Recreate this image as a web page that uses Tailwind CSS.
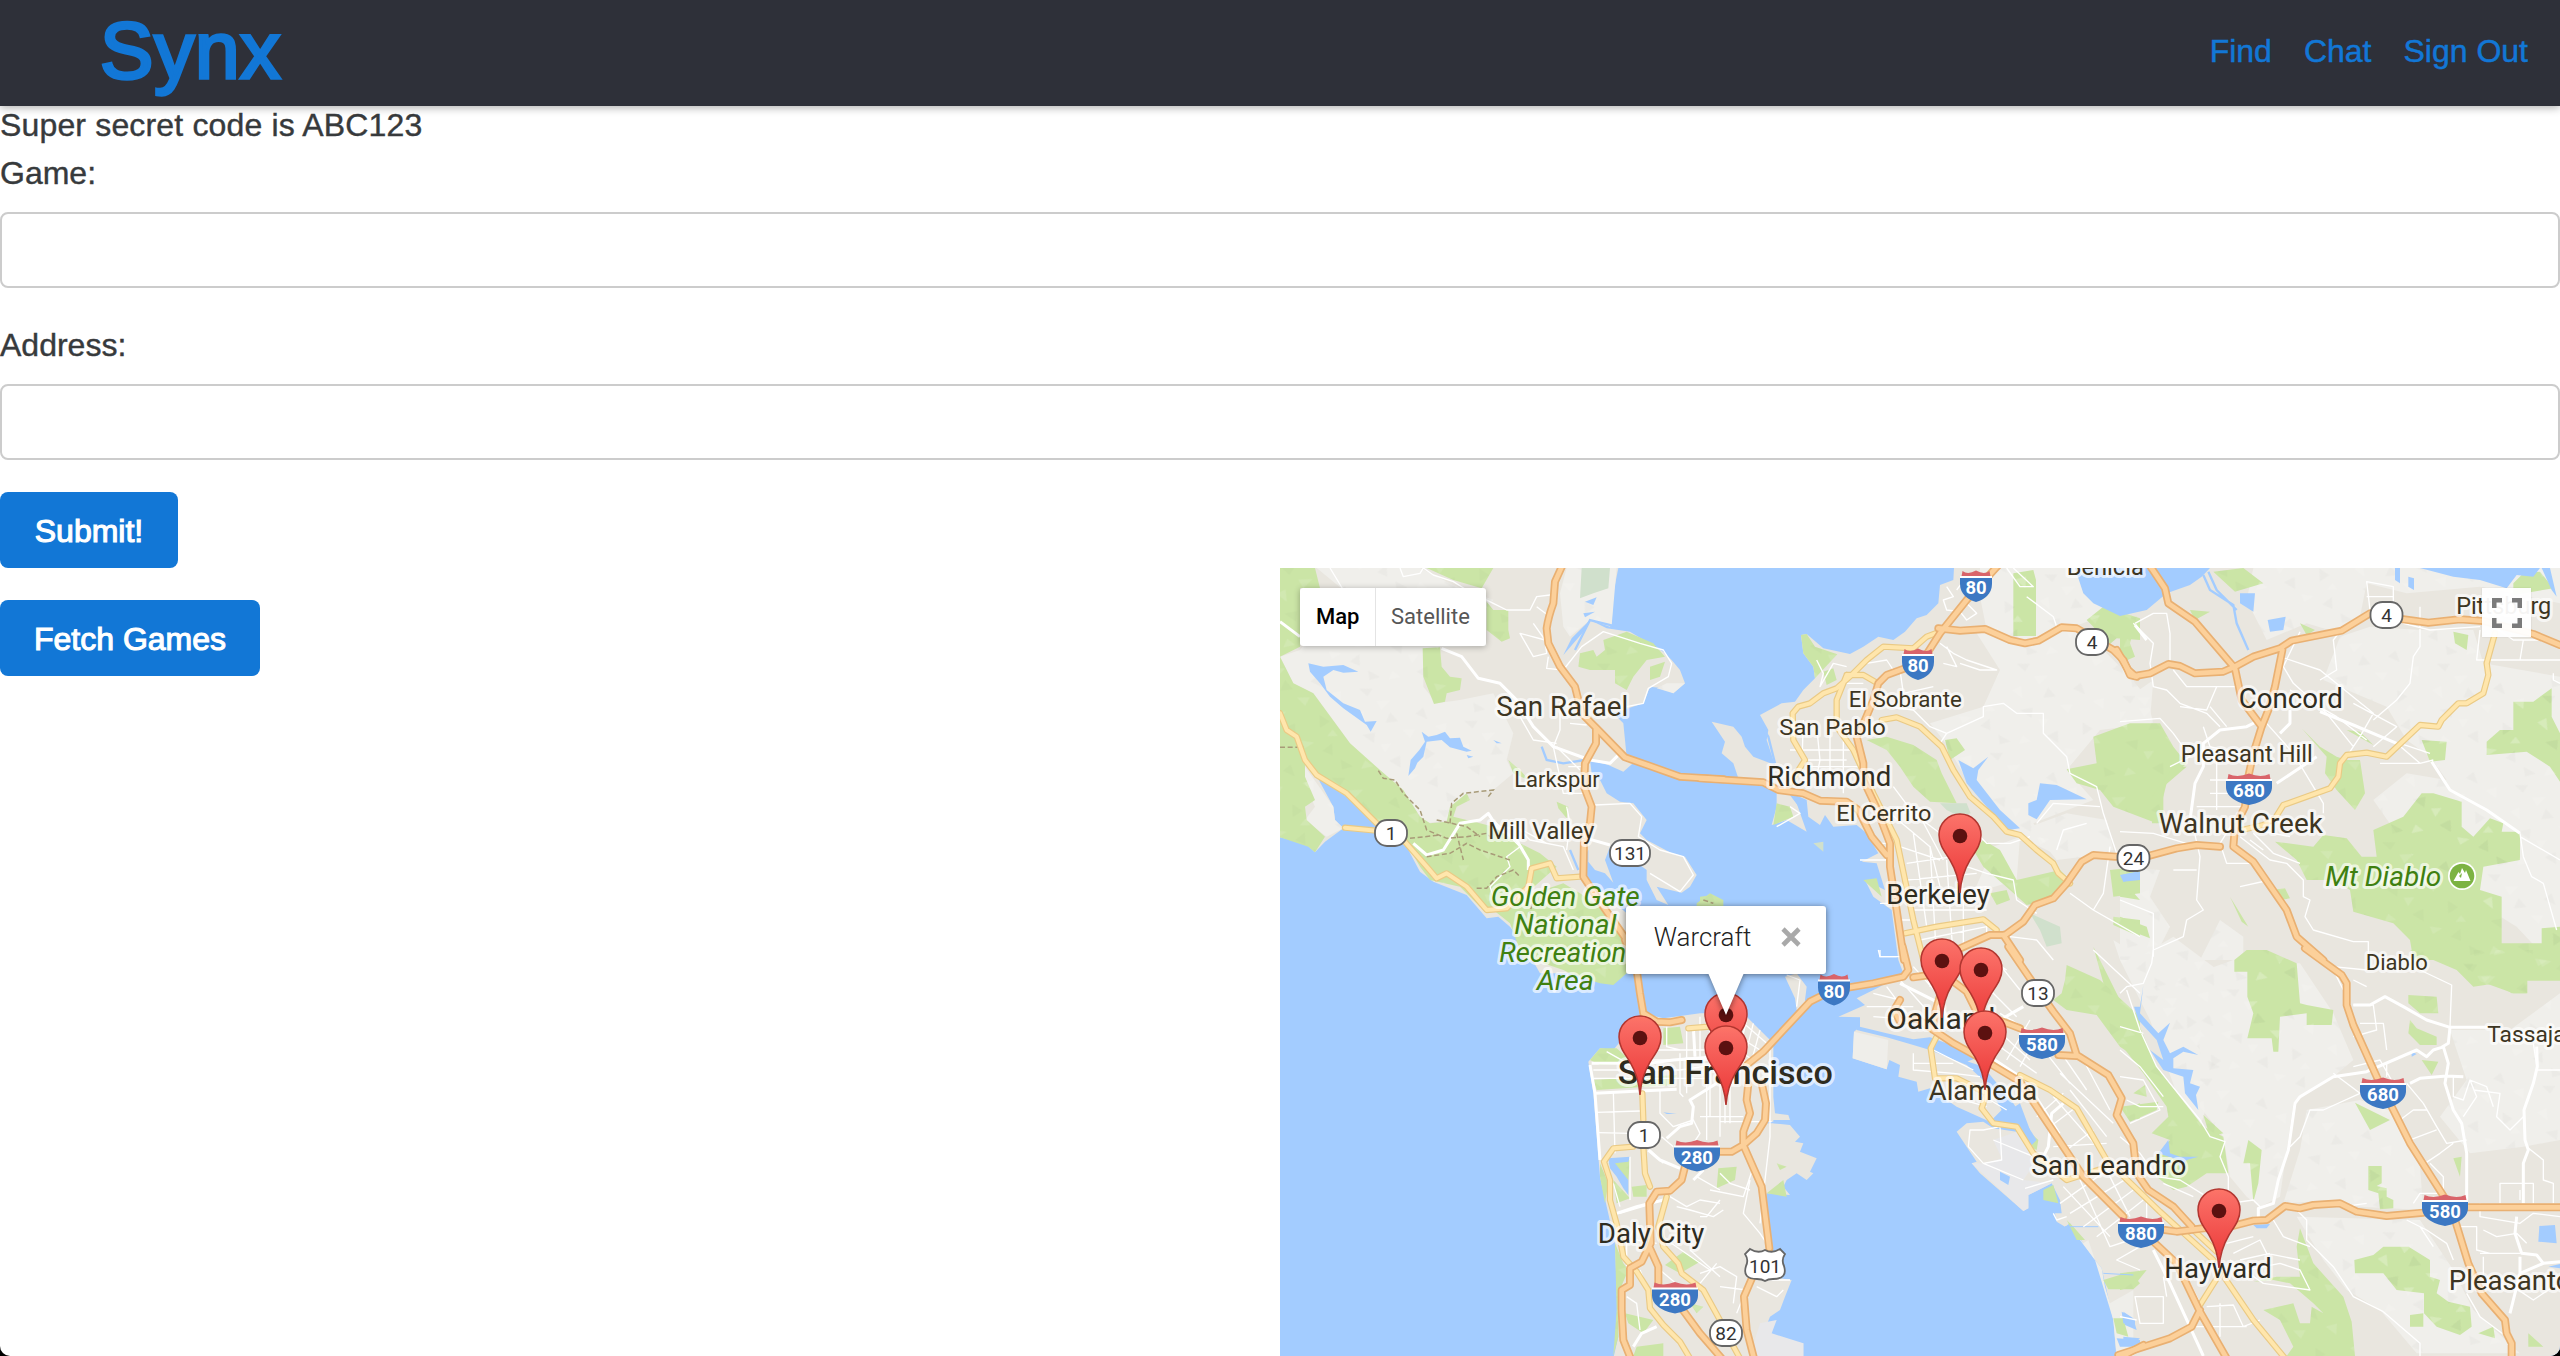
<!DOCTYPE html>
<html lang="en">
<head>
<meta charset="utf-8">
<title>Synx</title>
<script src="https://cdn.jsdelivr.net/npm/@tailwindcss/browser@4"></script>
</head>
<body class="bg-black">
<div class="flex h-[1356px] w-[2560px] flex-col overflow-hidden rounded-b-[10px] bg-white font-['Liberation_Sans',Arial,sans-serif] text-[32px] leading-[48px] text-[#373a3c]">
  <header class="z-10 flex h-[106px] shrink-0 items-start justify-between bg-[#2e3039] pl-[100px] pr-8 text-[#1277d6] shadow-[0_2px_8px_rgba(0,0,0,0.3)]">
    <a class="pt-[5px] text-[80px] leading-[92px] tracking-[0.8px] [-webkit-text-stroke:3.4px_#1277d6]">Synx</a>
    <nav class="flex gap-8 pt-[27px] [-webkit-text-stroke:0.5px_#1277d6]">
      <a>Find</a><a>Chat</a><a>Sign Out</a>
    </nav>
  </header>
  <form class="-mt-[5px] flex shrink-0 flex-col items-start">
    <p class="h-12 tracking-[0.16px] [-webkit-text-stroke:0.4px_#373a3c]">Super secret code is ABC123</p>
    <label class="h-12 [-webkit-text-stroke:0.4px_#373a3c]">Game:</label>
    <input class="mt-[15px] h-[76px] w-full rounded-lg border-2 border-[#ccc] bg-white px-6">
    <label class="mt-[33px] h-12 [-webkit-text-stroke:0.4px_#373a3c]">Address:</label>
    <input class="mt-[15px] h-[76px] w-full rounded-lg border-2 border-[#ccc] bg-white px-6">
    <button type="button" class="mt-8 h-[76px] w-[178px] rounded-lg bg-[#1277d6] pt-px text-white [-webkit-text-stroke:1.1px_#fff]">Submit!</button>
  </form>
  <div class="grid min-h-0 flex-1 grid-cols-2">
    <div class="pt-8">
      <button type="button" class="h-[76px] w-[260px] rounded-lg bg-[#1277d6] pt-px text-white [-webkit-text-stroke:1.1px_#fff]">Fetch Games</button>
    </div>
    <div class="relative overflow-hidden bg-[#a3ccff] font-[Roboto,sans-serif]">
      <svg class="block h-[788px] w-[1280px]" viewBox="1280 568 1280 788">
        <defs>
          <linearGradient id="pinFill" x1="0" y1="0" x2="0" y2="1"><stop offset="0" stop-color="#fd7567"/><stop offset=".1" stop-color="#fa6d65"/><stop offset="1" stop-color="#ea3535"/></linearGradient>
          <pattern id="facets" width="330" height="280" patternUnits="userSpaceOnUse" patternTransform="rotate(17)">
            <path fill="#000" fill-opacity=".018" d="M10,20l38,-12l-8,26zM120,60l30,20l-34,14zM210,18l22,30l-38,-6zM60,150l34,-18l6,30zM250,130l34,10l-22,26zM160,200l26,-24l12,34zM20,240l40,8l-28,18zM290,230l20,-30l12,34z"/>
            <path fill="#fff" fill-opacity=".12" d="M70,40l40,-14l-18,34zM170,100l36,-12l-6,28zM20,100l22,-20l14,34zM120,160l30,-10l-10,30zM260,60l30,-18l8,32zM220,220l38,-6l-22,24zM90,220l28,10l-32,18zM300,160l20,14l-30,10z"/>
          </pattern>
          <g id="pin"><path d="M0,0C-1,-14 -4,-23 -10,-33C-15,-41 -21,-48 -21,-58A21,21 0 1 1 21,-58C21,-48 15,-41 10,-33C4,-23 1,-14 0,0Z" fill="url(#pinFill)" stroke="#b23630" stroke-width="1.5"/><circle cy="-57" r="7.3" fill="#5c1110"/></g>

          <g id="lightland">
            <g transform="translate(1280 560) scale(.33333)">
              <path d="M110,24H420L520,75L640,120L600,165L620,258L480,262L430,300L430,380L470,430L540,420L640,400L700,520L680,600L700,640L640,690L560,700L500,780L440,790L380,720L300,640L210,550L100,400L40,370L0,290L60,270L190,90Z"/>
              <path d="M860,24H1010L995,195L930,180L870,230L850,200L840,100ZM1160,370L1215,370L1180,400L1130,385ZM75,620L160,740L165,780L190,805L140,830L75,780L105,740L70,660Z"/>
            </g>
            <g transform="translate(1700 560) scale(.33333)">
              <path d="M840,24H1130L1150,100L1230,160L1120,200L1180,240L1280,340L1340,410L1360,490L1200,510L1100,630L1180,720L1000,790L1060,880L960,830L880,740L790,640L730,540L690,490L850,440L900,330L830,220L860,210L840,110Z"/>
              <path d="M990,800L1100,760L1220,780L1240,870L1150,890L1070,900ZM820,1000L880,860L960,830L950,960ZM1260,1200L1240,1140L1320,1190L1420,1130L1620,1280L1600,1400L1500,1700L1430,1600L1350,1380Z"/>
            </g>
            <g transform="translate(2120 560) scale(.33333)">
              <path d="M400,24H1320V130L1080,80L860,100L740,70L720,170L660,220L560,190L440,240L380,120ZM610,360L660,230L750,200L900,210H1060L1090,310L1320,350V1218H1300L1190,1100L900,920L760,720L860,640L980,660L930,590L860,540L800,440Z"/>
              <path d="M0,430L100,360L90,480L0,480ZM240,1200L300,1080L370,1130V1200ZM0,920L120,930L90,1010L150,1100L100,1200H0Z"/>
            </g>
            <g transform="translate(2120 950) scale(.33333)">
              <path d="M200,80L340,30L540,40L640,190L700,330L640,380L520,460L480,740L420,770L380,740L330,680L310,560L240,470L240,300L100,110ZM560,480L720,450L830,490L900,650L910,780L720,770L650,750L490,760L540,600ZM1170,240L1320,130V570L1210,590L1050,610L960,500L1040,390L990,240Z"/>
              <path d="M530,800L900,810L1000,960L1060,1080L1200,1210H890L780,1080L680,1020L610,930Z"/>
            </g>
          </g>

          <g id="parks">
            <g transform="translate(1280 560) scale(.33333)">
              <path d="M0,24H105L120,85H60V260L0,290ZM440,24H640L605,85L520,60ZM620,125L640,150H685V210L690,235L665,245L620,210ZM428,265L480,262L485,320L510,350L545,355L540,390L500,400L495,425L462,432L430,350ZM0,290L40,370L100,400L210,550L300,630L370,690L420,770L450,790L500,785L510,740L560,700L570,720L530,740L520,770L600,790L640,800L700,840L780,880L830,920L740,1000L790,990L850,970L900,1000L970,1050L1040,1140V1200H730L690,1090L640,1050L600,1040L540,980L450,960L420,920L380,850L290,790L215,715L160,680L90,620L75,590L75,650L105,720L75,740L80,780L135,830L105,877L85,860L0,832Z"/>
              <path d="M970,240L1040,215L1120,250L1155,290L1100,300L1060,350L1040,390L1005,370L1005,330L930,330L895,320L900,280L940,270L950,290L975,270ZM1110,320L1155,305L1140,350L1110,360ZM685,600L725,635L745,660L700,640ZM830,725L865,740L860,775L835,745ZM1250,1030L1290,1000L1330,1020V1040H1250Z"/>
            </g>
            <g transform="translate(1700 560) scale(.33333)">
              <path d="M940,40L1000,30L1008,60V228H940ZM303,225L320,222L345,260L412,283L345,355L340,320L310,280ZM1160,180L1210,140L1320,175V240L1250,235L1220,260L1180,200ZM500,540L560,530L640,555L710,600L725,640L770,730L690,725L640,680L600,620L560,570ZM735,540L770,535L795,570L750,600ZM1100,628L1190,610L1180,530L1290,490L1380,490L1420,560L1460,610L1400,670L1370,790L1240,740L1200,690L1130,670ZM820,870L850,840L900,870L950,960L1080,930L1120,970L1060,1020L980,1035L930,990L850,920ZM870,1000L920,990L930,1020L890,1035ZM1230,930L1320,920V1000L1240,1010ZM1240,1070L1320,1080V1130L1240,1095ZM490,960L530,955L545,1010ZM230,730L270,740L280,770L220,795ZM0,1010L40,1005L60,1035L0,1040ZM370,335L400,325L410,360L380,375Z"/>
            </g>
            <g transform="translate(2120 560) scale(.33333)">
              <path d="M280,35L370,24L430,70L345,95ZM0,180L50,170L30,250L45,290L0,310ZM210,150L270,155L225,180ZM540,190L585,210L560,225ZM1000,215L1045,225L1040,270L1005,250ZM1180,70L1210,40L1260,35L1300,85L1180,105ZM1180,425L1240,425L1295,385V470L1320,520V665L1290,620L1220,575L1100,585V545L1140,510L1180,510ZM545,505L600,560L650,590L680,600H720L735,700L705,750L650,690L615,640L620,590ZM680,510L720,515L760,555ZM905,540L980,545L975,600L930,605ZM96,710L160,620L200,620L130,680L130,790H96Z"/>
              <path d="M465,845L580,860L610,825L680,835L725,890L770,890L760,810L850,770L905,700H940L1025,725V800L1060,830L1110,775L1150,790L1145,815L1200,815V900L1090,920L1080,990L1145,1010V1150L1265,1150V1105L1320,1100V1260H1220V1300H1180L1070,1260L1020,1200H880L870,1140L820,1090L700,1055L690,990L640,960L560,960L530,900ZM455,990L495,985L510,1015L480,1020ZM330,1010L385,1100L365,1085ZM0,960L20,975L60,1020L0,1010ZM0,1070L80,1100L90,1135L0,1100Z"/>
            </g>
            <g transform="translate(2120 950) scale(.33333)">
              <path d="M343,30L380,0H440L530,40L540,160L560,165L640,180L635,225H560V190L480,200L475,305H460L455,265H382L400,190L382,140V65H343ZM870,0H1320V92H1222V130H1175L1130,100L1060,110L1010,60ZM865,135L950,140L955,190L900,190L865,160ZM870,210L890,235L950,260V285L900,285L865,250ZM705,458L810,510L750,540ZM745,648H785V700L770,708L800,715L800,740L820,750V775L780,778L775,730L745,720ZM703,930L760,915L790,890H866L930,930V980L960,990L950,1030L985,1055L1050,1070L1055,1130L1020,1155L950,1130L912,1090V1030L830,1020L790,970H705Z"/>
              <path d="M-80,-10L0,150L55,220L110,350L140,390L250,530L310,560L325,670L260,670L200,710L160,720L110,680L105,620L150,570L95,550L145,500L140,470L70,370L0,280ZM0,470L115,455L110,480L30,515ZM40,430L75,405L80,440ZM250,495L310,550L270,560ZM385,570L425,600L415,700L400,755L390,640L370,640ZM540,835L580,940L670,1040L695,1115L705,1218H500L520,1190L480,1110L430,1080L520,1060L540,1120H570L575,1070L610,1090L580,1060L510,1000L460,990L400,995L470,980L540,980L530,890ZM870,1095L910,1090V1130H870ZM1225,1150L1270,1190L1225,1190ZM1075,1150L1120,1130L1125,1165ZM905,330L955,335L935,375ZM1000,625L1025,620L1020,680ZM0,970L80,960L40,1010L0,1020Z"/>
            </g>
            <g transform="translate(1280 950) scale(.33333)">
              <path d="M720,0H1040V70L1000,105L960,100L880,75L850,60L790,40ZM930,330L960,295L1010,295L1060,340L960,345ZM940,390L1100,380L1190,375L1180,405L950,420ZM1150,235L1200,230L1210,280L1150,285ZM985,640L1050,630L1045,690ZM1000,690L1050,745L1010,760ZM1055,710L1100,705V740L1060,740ZM960,640L985,700L975,760L960,680ZM1005,880L1030,940L1045,960L1015,1030V1160L1000,1218L1010,1080ZM1155,945L1210,905L1260,935L1200,970ZM1035,1090L1120,1110L1090,1150L1045,1120ZM1070,1190L1150,1180V1218H1060ZM1315,655L1370,650L1365,690L1310,715ZM1230,1060L1270,1070L1250,1090ZM1490,640L1520,650L1500,660ZM1460,730L1510,690L1520,740Z"/>
            </g>
            <g transform="translate(1700 950) scale(.33333)">
              <path d="M1100,45L1200,90L1320,200V330L1260,290L1190,195L1100,180L1060,150L1085,130L1095,90ZM960,520L1015,570L1010,600L990,590ZM1030,720L1060,705L1075,760L1030,750ZM1100,810L1120,830L1155,870L1130,870ZM1210,990L1290,965L1320,1000L1300,1018H1225ZM1240,1105L1270,1105L1285,1160L1250,1150ZM1275,475L1320,460V510L1285,500Z"/>
            </g>
          </g>

          <g id="highways">
            <g transform="translate(1280 560) scale(.33333)"><path d="M850,10L825,65L820,130Q805,170 800,205L805,250L840,320L885,380L905,460L950,505L1035,592L1110,618L1200,650L1330,658M948,505V550L915,610L912,680L935,740L930,790L912,835L910,950L970,1040L1040,1140"/></g>
            <g transform="translate(1700 560) scale(.33333)"><path d="M0,655L190,667L235,690L310,700L360,722L440,725L475,750L515,830L560,885M900,10L800,120L720,220L675,290M620,323L560,345L535,370L520,420L495,480L470,530L490,610L490,660L530,745L570,850V920L590,1050L612,1200M715,205L780,212L855,207L930,240L975,250L1015,242L1085,202L1130,205L1240,270L1270,300L1290,345L1310,350M1330,890H1245L1180,885L1145,905L1100,970L1060,1015L1005,1035L970,1085L915,1125L870,1125L770,1170M910,1125L960,1200"/></g>
            <g transform="translate(2120 560) scale(.33333)"><path d="M-10,270L25,330L45,348L90,340L145,312L180,318L225,340L310,335L345,320L400,290L480,265L515,242L665,212L750,160M850,178L925,188L1020,178L1090,183L1240,222L1320,255M85,10L135,85L145,130L225,185L345,325L365,420L425,500M487,270L465,380L445,450L425,500L400,580L385,650L375,740L345,800L340,860L400,905L500,1050L530,1130L610,1200M70,892L170,865L230,855L300,860"/></g>
            <g transform="translate(1280 950) scale(.33333)"><path d="M1035,-30L1070,60L1080,130L1090,190L1130,215L1170,217L1205,210M1215,650L1205,690L1170,722L1130,725L1108,760L1112,880L1085,935L1050,955V1005L1025,1020V1080L1030,1170L1052,1225M1110,895L1135,950V1000M1205,1075L1260,1150L1325,1225"/></g>
            <g transform="translate(1700 950) scale(.33333)"><path d="M608,-10L625,60L610,80L520,100L400,120L330,155L190,305L140,345M185,400L198,460L195,510L170,550L130,585M145,400L140,450L150,490L130,545V585L185,710L208,895M160,975L132,1040L140,1140L162,1225M55,605H95L130,585M925,-10L1000,100L1060,185L1110,250L1130,315L1225,375L1265,445L1250,495L1300,580L1310,670L1345,720L1420,770L1475,830M1075,315L1130,318M640,82L690,75L760,95L800,125L830,185L960,235M600,150L582,180L600,215L650,205L700,240L760,280L860,335L960,395L1050,530L1150,680L1270,800M725,120L705,190L700,240M1265,1220L1330,1185"/></g>
            <g transform="translate(2120 950) scale(.33333)"><path d="M555,-5L665,75L680,100V165L700,225L770,380L870,580L975,745L1005,810L1045,940L1085,1030L1155,1110L1160,1150L1175,1180V1225M100,875L170,940L240,1085L320,1225M240,1080L215,1130L150,1165L-5,1215M135,840L170,845L250,835L330,830L400,812L440,810L495,768L540,775L580,765L660,760L710,785L800,798L910,788M1040,772H1330"/></g>
          </g>

          <g id="arterials">
            <g transform="translate(1280 560) scale(.33333)"><path d="M0,460L20,510L50,530L75,600L110,645L200,700L290,790M370,840L440,920L470,955L500,940L560,980L620,1050L680,1045L745,980L755,925L810,910L830,955L900,950M195,803L290,812"/></g>
            <g transform="translate(1700 560) scale(.33333)"><path d="M720,215L680,230L640,265L550,260L500,300L455,345L410,385L370,400L330,430L295,440L278,460L280,540L315,600L270,670M440,345H490L525,365M440,345L410,420V500L460,570L520,700L590,840L640,1080L670,1200M545,480L590,472L660,500L725,560L760,630L810,710L880,770L920,815L960,825L1010,870L1060,910L1075,940L1110,970M615,1120L710,1100L850,1078L890,1110"/></g>
            <g transform="translate(2120 560) scale(.33333)"><path d="M1125,220L1100,310L1105,345L1090,400L1040,430H1015L965,480L955,500L900,495L800,590L740,578L680,585L660,610L655,650L630,685L560,710L490,735L465,775L430,795L365,810"/></g>
            <g transform="translate(1280 950) scale(.33333)"><path d="M1225,235L1310,228M1087,430L1090,510M1090,590L1095,670L1110,710M1060,590L1000,595L972,635L990,690V750L1015,840L1030,920L1070,965L1105,1020L1110,1075L1150,1125L1200,1175L1230,1225M1160,740L1135,830L1150,890L1195,940L1205,970L1270,1020L1325,1120M1355,1180L1380,1225"/></g>
            <g transform="translate(1700 950) scale(.33333)"><path d="M715,250L692,295L705,385H770L860,430L845,475L880,520L950,530L1000,610L1100,690L1210,655M960,375L1050,420L1130,475L1220,630L1380,785L1540,930M1480,840L1550,905M1560,970L1500,1065M1575,985L1660,1110L1755,1225"/></g>
          </g>
        </defs>

        <!-- land -->
        <g fill="#e9e6df">
          <path transform="translate(1280 560) scale(.33333)" d="M0,24H1015L1000,100L995,190L990,200L930,180L980,205L1050,215L1100,245L1150,275L1175,300L1200,330L1215,370L1180,400L1150,385L1110,380L1090,430L1000,460L1030,490L1040,590L1070,600L1030,635L985,615L930,600L935,640L960,660L980,700L1020,725L1060,730L1100,780L1080,820L1100,840L1175,880L1215,890L1250,945L1230,980L1205,998L1130,980L1165,1035L1130,1020L1100,960V930L1060,900L990,860L975,900L1000,968L975,940L945,930L925,905V870L905,900L915,950L970,1000L1040,1060V1240H780L735,1160L690,1100L655,1070L620,1075L560,1005L460,965L420,935L380,860L300,810L215,720L130,665L95,620L160,740L165,780L190,805L135,845L105,877L75,850L0,832Z"/>
          <path transform="translate(1700 560) scale(.33333)" d="M762,24L760,60L720,75L715,130L680,165L650,175L615,215L580,240L535,230L490,260L450,282L370,265L320,222L303,225L310,280L340,320L345,355L310,390L285,425L245,430L180,465L205,510L200,540L225,615L160,590L135,560L125,530L100,500L35,485L75,545L65,580L100,610L115,655H180L230,690V740L215,795L260,780L320,815L290,730L275,700L320,720L325,770L360,795L375,765L400,800L470,795L500,820L535,880L485,905L530,910L555,990L495,960L520,1010L575,1050L595,1200L610,1240L540,1280L470,1315L495,1335L415,1370L480,1372L480,1400L462,1415L458,1495L560,1528L568,1500L600,1515L595,1550L650,1565L655,1595L690,1585L770,1640L870,1685L900,1670L960,1630L990,1710L950,1715L880,1705L850,1685L800,1690L770,1715L830,1805L815,1810L840,1840L970,1953L985,1945V1905L1055,1870L1080,1920L1085,1960L1065,1960L1070,1985L1095,2000L1110,1990L1150,2050L1185,2100L1205,2125L1240,2280L1250,2400H2600V24Z"/>
          <path transform="translate(1280 950) scale(.33333)" d="M925,335L960,295L1000,300L1090,190L1150,205L1260,190L1330,190L1400,200L1480,280V440L1485,490L1525,495L1530,510H1480V520L1530,525L1560,560L1545,575L1570,580L1560,605L1610,625L1590,665L1600,670L1580,690L1550,670L1520,690L1510,710L1530,735L1460,730L1450,840L1480,920L1500,985L1535,990L1515,1040L1500,1080L1470,1100L1450,1150L1500,1170L1570,1180V1225H1000L1015,1160L1005,880L960,680L940,430Z"/>
          <path transform="translate(1700 950) scale(.33333)" d="M255,80L290,70L320,110L315,150L325,175L290,180L285,145Z"/>
        </g>
        <g fill="#efeeea"><path transform="translate(1700 950) scale(.33333)" d="M462,245L565,270L560,358L458,325ZM1185,930L1205,955L1215,1010L1230,1060L1300,1020V1218H1250L1240,1110ZM1110,830L1150,880L1165,870L1185,930Z"/></g>
        <path fill="#e8e8ea" transform="translate(1700 950) scale(.33333)" d="M880,570L950,545L1010,630L970,690L1055,700L985,735V775L970,783L815,640L860,640L905,625ZM180,1120L230,1110L215,1150L310,1180V1218H150Z"/>
        <use href="#lightland" fill="#f0efeb"/>
        <use href="#parks" fill="#cbe5a6"/>
        <use href="#lightland" fill="url(#facets)"/>
        <use href="#parks" fill="url(#facets)"/>
        <g fill="#d0e0cc">
          <path transform="translate(1280 560) scale(.33333)" d="M905,24H990L985,85L940,100L900,115Z"/>
          <path transform="translate(1700 560) scale(.33333)" d="M990,1060L1080,1100L1085,1150L1040,1160L1020,1110ZM720,730H800L812,760L780,770L740,750ZM340,850L370,845V875Z"/>
        </g>

        <!-- bays, lakes and reservoirs -->
        <g fill="#a3ccff" stroke="none">
          <path transform="translate(1700 560) scale(.33333)" d="M1125,24L1150,100L1180,130L1260,168L1340,150L1400,100L1470,75L1505,50L1530,24Z"/>
          <path transform="translate(1700 560) scale(.33333)" d="M775,600L820,625L865,590L835,630L830,660L900,750L960,805L925,810L860,740L800,670ZM985,730L1010,720L1020,670L1070,675L1160,718L1050,720L1010,778L985,765ZM1265,945L1320,935V960L1270,965Z"/>
          <path transform="translate(2120 560) scale(.33333)" d="M360,100H405L400,155L360,130ZM443,180L497,170L490,210L450,215ZM900,24H1260L1240,50L1190,45L1160,85L1080,60L1000,50ZM825,24H840V70L825,60ZM865,50L882,55V90L865,80ZM1265,24H1290L1310,110L1295,90ZM0,945L50,935L60,950L10,965Z"/>
          <path transform="translate(1280 560) scale(.33333)" d="M85,310L130,320L190,315L235,335L190,338L160,330L130,350L140,390L190,430L240,450L255,485L290,483L272,515L260,495L190,445L150,410L120,370L90,335ZM425,515L445,530L470,525L495,515L510,535L540,533L550,560L575,572L560,575L510,562L485,540L440,545L430,590L412,608L405,625L385,648L392,600L418,570L435,545ZM640,540L665,550L650,550ZM560,585L580,590L565,595ZM915,125L950,112L940,135ZM910,160L945,155L915,172ZM930,180L915,210L850,285L875,235Z"/>
          <path transform="translate(2120 950) scale(.33333)" d="M70,105L65,150L60,190L115,250L150,218L130,270L150,310L190,290L235,315L190,305L160,325V355L220,360L210,400L240,410L228,435L235,480L195,430L190,380L130,360L90,300L130,330L110,270L55,210L42,170H60ZM115,610L145,570L150,610L180,620L235,620L200,630L180,660L175,630ZM1258,828L1305,825L1310,880L1255,875ZM400,825L450,822L440,835H410ZM875,305L890,312L875,320ZM5,1085L45,1110V1130L10,1120ZM10,1160L60,1165L40,1185L10,1180ZM1285,950L1330,940L1320,955Z"/>
          <path transform="translate(1700 950) scale(.33333)" d="M470,228L560,250L640,268L690,262L740,280L790,330L850,350L940,460L975,515L1010,570L990,590L960,530L870,515L905,480L860,400L800,345L690,300L640,285L560,262L470,240ZM700,285L760,275L800,310L840,320L800,335L750,320ZM900,665L930,680L925,705L900,690ZM1270,1085L1300,1105L1310,1140L1275,1125ZM1250,1165L1320,1170V1190H1260ZM200,515H270V520H200Z"/>
          <path transform="translate(1280 950) scale(.33333)" d="M985,625L1050,620L1045,635L1005,640L1045,690V735L1030,715L1010,680L990,655ZM1150,487L1190,492H1160Z"/>
        </g>
        <g fill="none" stroke="#a3ccff" stroke-width="7">
          <path transform="translate(2120 560) scale(.33333)" d="M250,45L270,90L340,135L350,190L385,270M265,35L290,90L350,150"/>
          <path transform="translate(1280 560) scale(.33333)" d="M785,560L800,600L850,610L915,600M870,870L895,930M885,270L930,180L1010,200"/>
          <path transform="translate(1700 560) scale(.33333)" d="M180,490L205,530L225,610M270,700L300,740L320,780"/>
          <path transform="translate(1700 950) scale(.33333)" stroke-width="3" d="M1095,830H1195M1210,970L1300,975"/>
        </g>

        <!-- local streets -->
        <g fill="none" stroke="#fff" stroke-width="4" stroke-linejoin="round">
          <path transform="translate(1280 560) scale(.33333)" d="M360,24L370,50L420,40L430,24L460,45L520,65L560,90L640,130L680,150H750L770,110L810,105M770,140L810,170M760,190L795,240L720,220L760,290L800,280L795,240M805,290L800,325L850,330L905,260L970,215L1080,250L1150,270L1175,310L1165,350L1105,385L1090,430L1040,440M720,470L760,540L830,550M840,430V510L820,560L850,700H910M870,490L920,495M830,560L900,630M620,760L660,800L720,810L750,840L850,860L880,930M700,840L720,860L680,890L690,920L630,980L640,1010M690,790L800,850M945,735L1050,730L1085,770L1075,830L1140,870L1210,890L1240,945L1200,995L1110,940M150,24L190,90M865,620H905M840,640L870,690M860,740L870,790L860,870"/>
          <path transform="translate(1280 560) scale(.33333)" stroke-width="9" d="M0,185L60,230M485,265L545,290L595,355L660,370L710,420L760,500L820,560L930,600L990,610L1020,580M400,850L440,885L490,870L540,790L600,780L625,760L650,800L710,840L745,900V930M920,835L990,855"/>
          <path transform="translate(1700 560) scale(.33333)" d="M740,80L760,110L730,120L740,150L780,155L800,180L830,160L800,130M800,50L770,90M920,24L960,80H1000L940,24M980,110L1060,170L1070,200M720,250L760,280L800,300L890,330H840L780,310M740,260L770,320L730,310M600,330L610,400L700,380M350,300L370,340L360,380L400,310L440,320M500,310L560,300L580,330M440,370H490M350,500L360,600L350,650M310,480L305,640M390,500V640M430,540V700M270,570H460M330,620H480M310,600H440M560,440L640,450L690,500L740,520L850,470V440L910,430L950,460L1030,460L1030,520L1100,590L1110,640L1190,680L1210,760L1250,880M740,520L720,550M580,680L640,760L720,820L760,800M830,820L860,850L930,850L990,830M1010,790L1060,730L1200,740M1070,870L1090,810L1160,790M1230,860L1210,1000L1180,1050L1110,1000M1180,1050L1320,1130M600,860L720,900M620,910L760,890M620,960L830,940M640,1000L860,980M640,1050H860M660,1140L860,1100M640,820L680,1100M690,860L710,1200M740,900L760,1200M790,1000V1150M570,760L690,860L720,980M650,750L730,900M800,920L860,940L940,960L950,1020L1010,1060M930,1130L1010,1140L1060,1200M530,850H600M480,900H560M540,1030H590M535,1170L540,1190H600M860,1080V1120M270,740L300,760L230,800M590,1080H640"/>
          <path transform="translate(2120 560) scale(.33333)" d="M45,190L100,160H140L150,220V310M40,190L100,250L90,310L100,380L140,390L180,430L260,460L300,500M160,330L200,380H350M0,485L120,475L160,520L210,590L150,620M250,500L270,560L350,580M270,440L320,500M180,440L260,450L290,380M480,290L600,330L760,460L720,530L680,590M540,215L490,320L520,370L620,460L700,560M600,360L650,330L640,240L660,215M750,150L740,65L820,80V130M740,110H820M900,140V260L880,290L870,370L830,420L760,480M850,190L930,210L1080,200M1080,210L1070,300H1320M1210,240L1200,300M1130,205L1180,240H1300M700,430L830,500L760,560M510,390L650,470L740,540M440,490L520,580L610,730L610,760M290,590V750M270,660H380M270,700H360M230,740H370L300,850L320,910H400M360,830L450,900L500,910L550,960V1010L570,1020L555,1070L580,1110L700,1145H745V1200M400,820L460,880L540,910M390,840L430,870M410,810L510,830M210,760L240,890L230,1020L250,1050L200,1080L190,1130L100,1170M0,1020L100,1060V1190M0,815L100,820L230,860M160,930H230M780,610H900M830,550L900,610L940,600M1300,340V360L1320,370M360,980L450,960"/>
          <path transform="translate(2120 560) scale(.33333)" stroke-width="9" d="M210,780L225,670L250,620V550L300,510L380,500L420,480M600,455L700,495L830,550M480,520L510,490V450M470,670L590,590M935,605L990,690L1100,750L1200,820M45,195L80,240"/>
          <path transform="translate(2120 560) scale(.33333)" d="M1200,820L1210,890L1235,950L1270,970L1310,1110M1200,830L1320,900M840,550L930,580"/>
          <path transform="translate(1280 950) scale(.33333)" d="M940,360H1200L1300,345M940,385H1290M1000,425L1005,610M950,487L1080,483M955,548L1050,550M1140,420V490L1180,530L1240,510L1260,550L1240,580M980,305L1060,350M1100,330H1320M1120,300H1290M1160,230V290L1200,300M1200,310V430L1210,440M1220,230V430M1260,200V320M1290,210V500M1145,560L1180,590M1110,600L1150,640M1170,740L1220,770L1260,750L1320,760M1250,680L1320,720M1190,770L1230,780L1300,800L1330,780M1020,770L1000,700M1050,620V750M1020,790L1120,760M1070,820L1040,880V1000M1070,870L1130,880M1140,960L1200,1010L1260,1000M1080,960L1100,1010M1160,870L1290,960M1040,1040L1070,1060L1080,1140M1230,900L1320,980"/>
          <path transform="translate(1280 950) scale(.33333)" stroke-width="9" d="M930,345L945,430L960,630M935,340H1110L1180,330L1310,320M945,430L1080,423L1190,418M1310,400L1230,450L1240,470L1235,520L1200,530L1160,565M1105,600L1140,630L1200,655M1240,690L1270,660M1240,230L1245,320M1010,790L1070,770L1150,750M1060,1190L1085,1150L1130,1130"/>
          <path transform="translate(1700 950) scale(.33333)" d="M60,380V560M75,380V520M90,380V520M20,400V570M0,500H130M60,515H215M210,270V560L180,820M100,250L180,300M120,210L200,280M80,280L160,330M140,210L110,330M160,220L130,340M180,240L150,350M100,240V380M120,230V370M60,670L90,700L150,720M30,720L130,740L160,650M150,690L130,790L180,850L200,880M60,750L20,800H0M0,970L60,950L110,980L100,1060M60,1010L140,1020M200,990H270M170,1010L230,1040L250,1020M110,1090L130,1040M0,1000L50,940M640,310V360L760,370L840,380M640,340H760M700,300L820,360M720,430L860,470M870,450L920,480M810,540L850,540L900,530L905,630L850,640L805,590ZM850,640L970,690M880,570L1050,640M520,130L600,150M500,170H640M520,200L660,210M640,50L720,140M600,90L680,180M620,190L560,110M660,10L690,110M700,0L760,100M740,0L830,110M850,100L950,200M880,20L960,120M830,0L920,60M900,190L1000,250M870,220L990,330M900,290L1010,370M920,330L990,210M960,350L1020,240M860,270L940,210M1010,500L1090,430M1050,530L1130,470M1100,600L1180,540M1060,590L1220,580M1080,760L1250,640M1110,790L1290,680M1150,830L1300,720M1190,860L1330,750M1090,710L1230,860M1140,690L1230,890L1290,870M1210,640L1290,800M1060,440L1200,600M1010,440L1080,550M1110,420L1220,560M1080,370L1240,520M1150,330L1230,480M1000,260L1110,400M1050,260L1160,420M1060,790L1070,810L1100,800M1320,890L1250,930L1320,960M1180,0L1320,130M975,715L1060,690M260,75L300,90L290,170M540,0V20H590"/>
          <path transform="translate(1700 950) scale(.33333)" stroke-width="9" d="M600,100L720,160L760,240M870,320L960,380M1090,460L1055,490L1045,590L1020,640M900,210L970,170"/>
          <path transform="translate(2120 950) scale(.33333)" d="M100,0L95,40L70,100L20,110L0,130M20,120L60,240L110,350L150,400L240,510L270,560L315,575L300,620L325,680V740M0,230L70,250M0,300L60,350L130,440M0,380L70,390L120,480L30,520M20,450L60,470H130M0,560L60,610L110,680L180,690L260,740M80,740V810M130,700L220,740M330,760L400,750L420,770M320,880L400,860M340,910L420,870L440,910L540,930M360,930L450,910M380,960L480,940L540,960L570,1020L430,1000L330,930M45,1040H130V1120H60ZM0,1100L50,1110M130,980L140,1040M260,1070L340,1065L370,1130L420,1110M300,1060V1160M210,1000L240,1060M200,1130H380M530,780L560,810L560,870L640,950L700,1040L790,1085M790,1085L900,1180V1218M460,810L490,860L570,890M670,770L740,760M560,0L640,60L670,120M700,165H760L770,240L700,260M720,220H790L800,300M740,110L700,90M700,350L780,330L820,400M640,370L720,430L610,480H570L540,560L510,590M800,340V380M860,400L910,460L950,530L980,580L1040,570M840,510L880,480H920M870,570L950,540M900,650L960,610L1000,580M930,640L970,680V720M1000,380V440L1030,450L1050,390L1100,410L1120,470M1060,420L1140,430L1130,500L1170,540L1210,500M1050,390L1070,440L1030,500M1220,590L1270,630V690L1300,700V760M1140,760V700H1240V760M1200,750V720M880,760L900,730H960M860,810L920,840L980,880L1000,930M900,830L940,890M1010,830H1070V900L1110,910M1080,760V800L1200,820L1240,790L1320,800M1090,840L1130,860L1190,850L1220,880M1080,910L1200,910M1090,1000L1090,920M1040,1030L1080,1100L1160,1160M1180,1010L1240,1050L1300,1010M1250,360H1320M1240,280L1252,360M640,50L740,60M900,60L995,105L990,230"/>
          <path transform="translate(2120 950) scale(.33333)" stroke-width="9" d="M700,165H750L795,140L850,170L920,210L990,232H1105M1250,290L1252,350L1240,400L1212,480L1215,570L1225,600L1210,640V760M990,232L985,280L965,292L940,300L920,320L890,300L740,365L640,380L540,440L525,460L505,600L475,690L460,760L415,775V805M970,290L985,340L975,400L1000,480L1025,520L1040,610V750M870,400L900,385L980,378L1030,380M100,900L150,1000L250,1218M1190,800L1185,850L1205,910L1250,915L1270,940L1320,935M1200,920V970L1170,1090M1270,940L1200,970"/>
        </g>
        <!-- park trails -->
        <path transform="translate(1280 560) scale(.33333)" fill="none" stroke="#a89b78" stroke-width="4.5" stroke-dasharray="15 8" d="M0,562H70M295,632L310,655L345,660L370,700L420,750L440,810L500,835L560,830L620,820L640,840M390,835L480,825M440,890L510,880L560,850L600,870L690,900M510,790L515,730L550,700L640,690L625,710M530,820L550,900M470,780L560,800L600,830M590,985H620L650,950L700,930L720,950M760,1010L750,1060M1270,1020L1300,1030"/>

        <!-- roads -->
        <g fill="none" stroke-linecap="round" stroke-linejoin="round">
          <use href="#arterials" stroke="#eaca85" stroke-width="19"/>
          <use href="#arterials" stroke="#ffe6ac" stroke-width="12"/>
          <use href="#highways" stroke="#e9b072" stroke-width="24"/>
          <use href="#highways" stroke="#fcd09a" stroke-width="14"/>
        </g>
        <g id="shields" font-family="Roboto, sans-serif" text-anchor="middle" font-size="19"></g>
        <g id="labels" transform="translate(-1.2 0)" font-family="Roboto, sans-serif" paint-order="stroke" stroke="#fff" stroke-opacity=".65" stroke-width="6" stroke-linejoin="round"></g>
        <g transform="translate(2462 876)"><circle r="14" fill="#fff"/><circle r="12.3" fill="#7cb342"/><path fill="#fff" d="M-8.5,5L-3.5,-4L-2,-2L0,-8L3,-3L4,-6L8.5,5ZM-3,0L-1,2L0,-3Z"/></g>
        <g id="pins"></g>

        <!-- info window -->
        <path d="M1629,906H1823Q1826,906 1826,909V971Q1826,974 1823,974H1743.500L1726,1015L1708.500,974H1629Q1626,974 1626,971V909Q1626,906 1629,906Z" fill="#fff" class="drop-shadow-[0_1px_3px_rgba(0,0,0,0.5)]"/>
        <text x="1653.800" y="945.500" font-family="Roboto, sans-serif" font-weight="300" font-size="26" fill="#222" textLength="97.500" lengthAdjust="spacingAndGlyphs">Warcraft</text>
        <path d="M1783,929L1799,945M1799,929L1783,945" stroke="#a9a9a9" stroke-width="4.600"/>
      </svg>
      <div class="absolute left-5 top-5 flex h-[58px] w-[186px] rounded-[3px] bg-white text-[22px] leading-[58px] shadow-[0_1px_6px_rgba(0,0,0,0.3)]">
        <div class="w-[76px] border-r border-[#e4e4e4] pl-4 font-medium text-black">Map</div>
        <div class="pl-[15px] text-[#565656]">Satellite</div>
      </div>
      <div class="absolute right-[29px] top-5 flex h-[49px] w-[49px] items-center justify-center bg-white/95 shadow-[0_0_2px_rgba(0,0,0,0.1)]">
        <svg class="h-[30px] w-[30px]" viewBox="0 0 30 30" fill="none" stroke="#7b7b7b" stroke-width="4.5"><path d="M2.250,10V2.250H10M20,2.250H27.750V10M27.750,20V27.750H20M10,27.750H2.250V20"/></svg>
      </div>
    </div>
  </div>
</div>
<script>
  const $ = id => document.getElementById(id);
  // text, x, baseline, width, size, fill, extra attributes
  const town = '#3d3522', city = '#2f2c1f', park = '#3f8011';
  const it = 'font-style="italic"';
  const labels = [
    ['San Rafael',1497.5,715.5,132,28,town],['Larkspur',1515.5,787,85.5,22.5,town],['Mill Valley',1489.5,839,106,23,town],
    ['Golden Gate',1492,905.5,149,27,park,it],['National',1515.5,933.5,102,27,park,it],['Recreation',1500.5,962,127,27,park,it],['Area',1538,990,57,27,park,it],
    ['El Sobrante',1850,707,113,22.5,town],['San Pablo',1780.5,735,106.5,22.5,town],['Richmond',1768.5,786,124,28,city],['El Cerrito',1837.5,820.5,95,22.5,town],
    ['Berkeley',1887.5,904,103.5,28,city],['Benicia',2068,574.5,77,23,town],['Concord',2240,707.5,104,28,city],['Pleasant Hill',2182,761.5,132,23,town],
    ['Walnut Creek',2160,832.5,164,28,town],['Mt Diablo',2326.5,885.5,116,27,park,it],['Pittsburg',2457.5,613.5,95,23,town],['Diablo',2367,970,62,22.5,town],
    ['Tassajara',2488.5,1041.5,98,22.5,town],['San Francisco',1619,1083.5,215,33,city,'font-weight="500"'],['Oakland',1887.5,1028.5,109,29,city],
    ['Alameda',1930,1099.5,108.5,28,town],['San Leandro',2032.5,1174.5,155,28,city],['Hayward',2165.5,1277.5,107.5,28,city],['Pleasanton',2450,1289.5,138,28,town],
    ['Daly City',1599,1242.5,106.5,28,city]];
  $('labels').innerHTML = labels.map(([t,x,y,w,s,f,e='']) =>
    `<text x="${x}" y="${y}" textLength="${w}" lengthAdjust="spacingAndGlyphs" font-size="${s}" fill="${f}" ${e}>${t}</text>`).join('');

  const state = [['1',1391,833],['131',1630,853],['4',2092,642],['4',2386.5,615],['24',2133.5,858],['1',1644,1135],['13',2038,993],['82',1726,1333]];
  const inter = [['80',1976,586],['80',1918,664],['80',1834,989.5],['680',2249,789],['680',2383,1093],['580',2042,1043],['580',2445,1210],['880',2141,1232],['280',1697,1155.5],['280',1675,1297.5]];
  $('shields').innerHTML = state.map(([t,x,y]) => {
    const w = t.length > 2 ? 40 : 32;
    return `<g transform="translate(${x} ${y})"><rect x="${-w/2}" y="-13" width="${w}" height="26" rx="12" fill="#fff" stroke="#666" stroke-width="1.8"/><text y="6.5" fill="#333">${t}</text></g>`;
  }).join('') + inter.map(([t,x,y]) => {
    const k = t.length > 2 ? 23 : 16;
    return `<g transform="translate(${x} ${y})"><path d="M${-k+1},-7L${-k+2.5},-15Q${-k/2},-11 0,-15.500Q${k/2},-11 ${k-2.5},-15L${k-1},-7Z" fill="#d9646a"/><path d="M${-k},-9H${k}V-2C${k},8 ${k/2},14 0,16C${-k/2},14 ${-k},8 ${-k},-2Z" fill="#3c78c3"/><path d="M${-k},-9H${k}" stroke="#fff" stroke-width="2"/><text y="8" fill="#fff" font-weight="700" font-size="18.500">${t}</text></g>`;
  }).join('') + `<g transform="translate(1765 1265)"><path d="M-15,-16Q-7,-11 0,-15Q7,-11 15,-16L20,-11Q16,-5 19,1Q23,14 8,14Q3,14 0,16Q-3,14 -8,14Q-23,14 -19,1Q-16,-5 -20,-11Z" fill="#fff" stroke="#666" stroke-width="1.800"/><text y="7.500" fill="#333">101</text></g>`;

  const pins = [[1960,893],[1942,1018],[1981,1027],[1726,1072],[1985,1090],[1640,1095],[1726,1105],[2219,1268]];
  $('pins').innerHTML = pins.map(([x,y]) => `<use href="#pin" x="${x}" y="${y}"/>`).join('');
</script>
</body>
</html>
